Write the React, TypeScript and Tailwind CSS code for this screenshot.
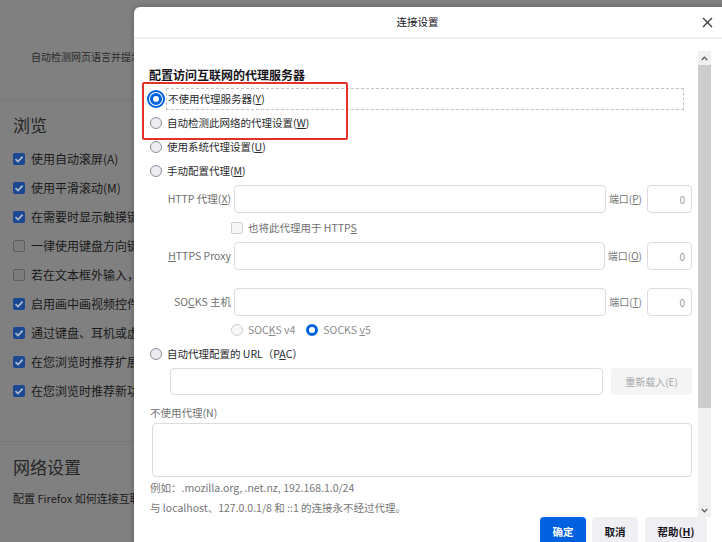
import React from "react"

const font = "font-['Noto_Sans_CJK_SC','Noto_Sans',sans-serif]"

function BgCheck({ on, label }: { on: boolean; label: string }) {
  return (
    <div className="h-[29px] flex items-center pl-[13px] gap-[6px] whitespace-nowrap">
      {on ? (
        <span className="w-[12px] h-[12px] rounded-[2px] bg-[#1b4892] flex items-center justify-center shrink-0">
          <svg width="10" height="10" viewBox="0 0 10 10">
            <path d="M1.5 5.2 L4 7.6 L8.6 2.6" fill="none" stroke="#b4bccb" strokeWidth="1.6" />
          </svg>
        </span>
      ) : (
        <span className="w-[12px] h-[12px] rounded-[2px] border border-[#5e5e5e] bg-[#7c7c7c] shrink-0" />
      )}
      <span className="text-[12px] leading-[16px] text-[#1a1a1a]">{label}</span>
    </div>
  )
}

function Radio({ checked, focus, disabled }: { checked?: boolean; focus?: boolean; disabled?: boolean }) {
  if (checked) {
    return (
      <span
        className={
          "block w-[12px] h-[12px] rounded-full border-[3.5px] border-[#0061e0] bg-white shrink-0 " +
          (focus ? "outline-2 outline-offset-1 outline-[#0061e0]" : "")
        }
      />
    )
  }
  return (
    <span
      className={
        "block w-[12px] h-[12px] rounded-full border shrink-0 " +
        (disabled ? "border-[#cfcfd6] bg-[#f7f7f8]" : "border-[#8f8f9d] bg-[#ececf0]")
      }
    />
  )
}

function ProxyRow({ label, port }: { label: React.ReactNode; port: React.ReactNode }) {
  return (
    <div className="flex items-center h-[28px]">
      <div className="w-[82px] text-right text-[10.5px] leading-[14px] text-[#6f6f6f] whitespace-nowrap">{label}</div>
      <div className="ml-[3px] flex-1 h-full rounded-[4px] border border-[#dcdcdf] bg-white" />
      <div className="ml-[3px] text-[10px] leading-[14px] text-[#777] whitespace-nowrap">{port}</div>
      <div className="ml-[5px] w-[45px] h-full rounded-[4px] border border-[#dcdcdf] bg-white flex items-center justify-end pr-[6px] text-[10px] text-[#9a9a9a]">
        0
      </div>
    </div>
  )
}

export default function App() {
  return (
    <div className={"relative w-[722px] h-[542px] overflow-hidden bg-[#808080] " + font}>
      {/* settings page behind the dialog */}
      <div className="flex flex-col">
        <div className="mt-[50px] h-[14px] pl-[31px] text-[10px] leading-[14px] text-[#2a2a2a] whitespace-nowrap">
          自动检测网页语言并提示翻译
        </div>
        <div className="mt-[36px] h-px bg-[#787878]" />
        <div className="mt-[12px] h-[24px] pl-[13px] text-[17px] leading-[24px] text-[#262626]">浏览</div>
        <div className="mt-[7px] flex flex-col">
          <BgCheck on label="使用自动滚屏(A)" />
          <BgCheck on label="使用平滑滚动(M)" />
          <BgCheck on label="在需要时显示触摸键盘" />
          <BgCheck on={false} label="一律使用键盘方向键浏览网页(K)" />
          <BgCheck on={false} label="若在文本框外输入，则开始查找(X)" />
          <BgCheck on label="启用画中画视频控件(E)" />
          <BgCheck on label="通过键盘、耳机或虚拟界面控制媒体" />
          <BgCheck on label="在您浏览时推荐扩展" />
          <BgCheck on label="在您浏览时推荐新功能" />
        </div>
        <div className="mt-[36px] h-px bg-[#787878]" />
        <div className="mt-[13px] h-[24px] pl-[13px] text-[17px] leading-[24px] text-[#262626]">网络设置</div>
        <div className="mt-[9px] h-[20px] pl-[13px] text-[11px] leading-[20px] text-[#1a1a1a] whitespace-nowrap">
          配置 Firefox 如何连接互联网。
        </div>
      </div>

      {/* connection settings dialog */}
      <div className="absolute left-[134px] top-[7px] w-[600px] h-[560px] bg-white rounded-tl-[6px] shadow-[0_0_6px_rgba(0,0,0,0.25)] flex flex-col">
        <div className="h-[30px] flex items-center shrink-0">
          <div className="w-[567px] text-center text-[10.5px] leading-[14px] text-[#15141a]">连接设置</div>
          <svg className="ml-[1px]" width="11" height="11" viewBox="0 0 11 11">
            <path d="M1 1 L10 10 M10 1 L1 10" stroke="#3a3a3a" strokeWidth="1.3" />
          </svg>
        </div>
        <div className="h-[2px] bg-[#f0f0f0] shrink-0" />

        <div className="h-[478px] flex shrink-0">
          <div className="w-[564px] pl-[15px] pr-[6px] pt-[24px] overflow-hidden flex flex-col">
            <div className="h-[24px] flex items-center text-[12px] font-bold text-[#15141a] whitespace-nowrap">
              配置访问互联网的代理服务器
            </div>
            <div className="h-[24px] flex items-center pl-[1px]">
              <Radio checked focus />
              <div className="ml-[4px] w-[518px] h-[22px] border border-dashed border-[#c4c4c4] flex items-center pl-px text-[10.5px] text-[#2a2a2e] whitespace-nowrap">
                不使用代理服务器(<u>Y</u>)
              </div>
            </div>
            <div className="h-[24px] flex items-center pl-[1px] gap-[5px] text-[10.5px] text-[#2a2a2e] whitespace-nowrap">
              <Radio />
              <span>
                自动检测此网络的代理设置(<u>W</u>)
              </span>
            </div>
            <div className="h-[24px] flex items-center pl-[1px] gap-[5px] text-[10.5px] text-[#2a2a2e] whitespace-nowrap">
              <Radio />
              <span>
                使用系统代理设置(<u>U</u>)
              </span>
            </div>
            <div className="h-[24px] flex items-center pl-[1px] gap-[5px] text-[10.5px] text-[#2a2a2e] whitespace-nowrap">
              <Radio />
              <span>
                手动配置代理(<u>M</u>)
              </span>
            </div>

            <div className="mt-[2px]">
              <ProxyRow label={<>HTTP 代理(<u>X</u>)</>} port={<>端口(<u>P</u>)</>} />
            </div>
            <div className="h-[29px] flex items-center pl-[82px] gap-[5px] text-[10.5px] text-[#6f6f6f] whitespace-nowrap">
              <span className="block w-[12px] h-[12px] rounded-[2px] border border-[#cfcfd6] bg-[#f7f7f8] shrink-0" />
              <span>
                也将此代理用于 HTTP<u>S</u>
              </span>
            </div>
            <ProxyRow label={<><u>H</u>TTPS Proxy</>} port={<>端口(<u>O</u>)</>} />
            <div className="mt-[18px]">
              <ProxyRow label={<>SO<u>C</u>KS 主机</>} port={<>端口(<u>T</u>)</>} />
            </div>
            <div className="h-[28px] flex items-center pl-[82px] text-[10.5px] text-[#8a8a8a] whitespace-nowrap">
              <Radio disabled />
              <span className="ml-[5px]">
                SOC<u>K</u>S v4
              </span>
              <span className="ml-[11px] flex">
                <Radio checked />
              </span>
              <span className="ml-[5px]">
                SOCKS <u>v</u>5
              </span>
            </div>
            <div className="h-[20px] flex items-center pl-[1px] gap-[5px] text-[10.5px] text-[#2a2a2e] whitespace-nowrap">
              <Radio />
              <span>
                自动代理配置的 URL（P<u>A</u>C）
              </span>
            </div>
            <div className="mt-[4px] h-[27px] flex pl-[21px]">
              <div className="flex-1 rounded-[4px] border border-[#dcdcdf] bg-white" />
              <div className="ml-[8px] w-[81px] rounded-[4px] bg-[#f4f4f5] flex items-center justify-center text-[10px] text-[#a8a8a8] whitespace-nowrap">
                重新载入(E)
              </div>
            </div>
            <div className="mt-[8px] h-[20px] flex items-center pl-[1px] text-[10.5px] text-[#6f6f6f] whitespace-nowrap">
              不使用代理(N)
            </div>
            <div className="ml-[3px] h-[54px] rounded-[4px] border border-[#dcdcdf] bg-white shrink-0" />
            <div className="mt-[1px] h-[20px] flex items-center pl-[1px] text-[10.5px] text-[#777] whitespace-nowrap">
              例如：.mozilla.org, .net.nz, 192.168.1.0/24
            </div>
            <div className="h-[19px] flex items-center pl-[1px] text-[10.5px] text-[#777] whitespace-nowrap">
              与 localhost、127.0.0.1/8 和 ::1 的连接永不经过代理。
            </div>
          </div>

          {/* scrollbar */}
          <div className="w-[13px] mt-[12px] bg-[#f0f0f0] flex flex-col shrink-0">
            <div className="h-[14px] flex items-center justify-center">
              <svg width="7" height="5" viewBox="0 0 7 5">
                <path d="M0.8 4 L3.5 1.2 L6.2 4" fill="none" stroke="#555" strokeWidth="1.2" />
              </svg>
            </div>
            <div className="h-[343px] bg-[#cdcdcd]" />
            <div className="flex-1" />
            <div className="h-[14px] flex items-center justify-center">
              <svg width="7" height="5" viewBox="0 0 7 5">
                <path d="M0.8 1 L3.5 3.8 L6.2 1" fill="none" stroke="#555" strokeWidth="1.2" />
              </svg>
            </div>
          </div>
        </div>

        <div className="flex pl-[406px] gap-[6px] shrink-0">
          <div className="w-[46px] h-[30px] rounded-[4px] bg-[#0061e0] flex items-center justify-center text-[10.5px] font-bold text-white">
            确定
          </div>
          <div className="w-[46px] h-[30px] rounded-[4px] bg-[#f0f0f4] flex items-center justify-center text-[10.5px] font-bold text-[#15141a]">
            取消
          </div>
          <div className="ml-[1px] w-[62px] h-[30px] rounded-[4px] bg-[#f0f0f4] flex items-center justify-center text-[10.5px] font-bold text-[#15141a] whitespace-nowrap">
            帮助(<u>H</u>)
          </div>
        </div>
      </div>

      {/* red annotation box */}
      <div className="absolute left-[142px] top-[82px] w-[206px] h-[58px] border-2 border-[#e5312b] rounded-[2px]" />
    </div>
  )
}
